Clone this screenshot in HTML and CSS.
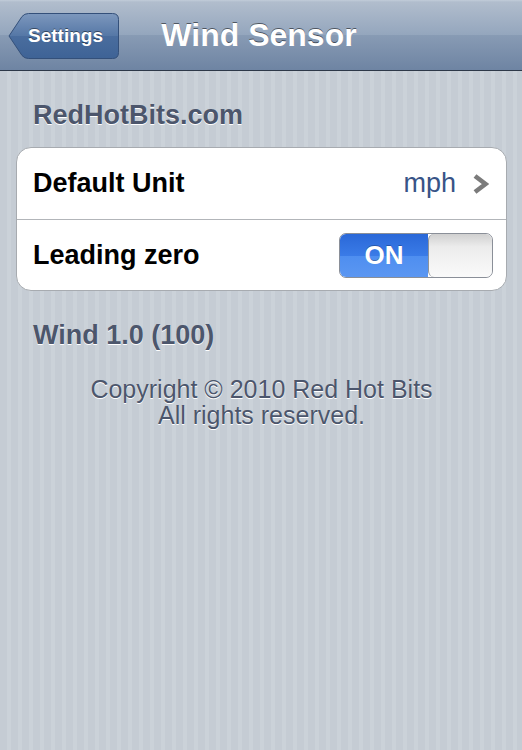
FILE: index.html
```html
<!DOCTYPE html>
<html lang="en">
<head>
  <meta charset="UTF-8" />
  <meta name="viewport" content="width=device-width, initial-scale=1.0" />
  <title>Wind Sensor</title>
  <link rel="stylesheet" href="styles.css">
</head>
<body>
  <nav class="navbar">
    <a href="#" class="back-btn">
      <svg class="back-shape" width="111" height="46" viewBox="0 0 111 46">
        <defs>
          <linearGradient id="backGrad" x1="0" y1="0" x2="0" y2="1">
            <stop offset="0" stop-color="#7d98bd" />
            <stop offset="0.5" stop-color="#5577a6" />
            <stop offset="0.5" stop-color="#4a6d9e" />
            <stop offset="1" stop-color="#3e6396" />
          </linearGradient>
        </defs>
        <path d="M1 23 L14 3.5 Q16.5 0.5 20.5 0.5 L104.5 0.5 Q110.5 0.5 110.5 6.5 L110.5 39.5 Q110.5 45.5 104.5 45.5 L20.5 45.5 Q16.5 45.5 14 42.5 Z" fill="url(#backGrad)" stroke="#34507a" stroke-width="1" />
      </svg>
      <span class="back-label">Settings</span>
    </a>
    <h1 class="title">Wind Sensor</h1>
  </nav>

  <main class="content">
    <h2 class="group-header">RedHotBits.com</h2>
    <div class="group">
      <div class="row">
        <span class="row-label">Default Unit</span>
        <span class="row-value">mph</span>
        <svg class="chevron" viewBox="0 0 18 20">
          <path d="M3 2 L13.5 10 L3 18" fill="none" stroke="#7b7b7b" stroke-width="4.6" />
        </svg>
      </div>
      <div class="row">
        <span class="row-label">Leading zero</span>
        <div class="switch">
          <span class="switch-on">ON</span>
          <span class="switch-knob"></span>
        </div>
      </div>
    </div>

    <h2 class="group-header version">Wind 1.0 (100)</h2>
    <p class="footer-note">Copyright © 2010 Red Hot Bits<br>All rights reserved.</p>
  </main>
</body>
</html>
```

FILE: styles.css
```css
* {
  box-sizing: border-box;
}
body {
  margin: 0;
  padding: 0;
  font-family: 'Liberation Sans', Arial, sans-serif;
  min-height: 750px;
  background: repeating-linear-gradient(90deg, #c5ccd4 0, #c5ccd4 7px, #cbd2d9 7px, #cbd2d9 11px);
}
.navbar {
  position: relative;
  display: flex;
  align-items: center;
  height: 71px;
  padding: 1px 0 0 8px;
  background: linear-gradient(#c2ccd9 0, #b1bdcd 2px, #94a6bd 50%, #889bb4 50%, #6e84a3 100%);
  border-bottom: 1px solid #2d3848;
}
.back-btn {
  position: relative;
  display: flex;
  align-items: center;
  width: 111px;
  height: 46px;
  text-decoration: none;
}
.back-shape {
  position: absolute;
  top: 0;
  left: 0;
}
.back-label {
  position: relative;
  padding-left: 20px;
  color: #fff;
  font-size: 19px;
  font-weight: bold;
  text-shadow: 0 -1px 0 rgba(0, 0, 0, 0.45);
}
.title {
  position: absolute;
  left: 0;
  right: 0;
  top: 0;
  bottom: 0;
  margin: 0;
  display: flex;
  align-items: center;
  justify-content: center;
  pointer-events: none;
  padding: 1px 4px 0 0;
  color: #fff;
  font-size: 32px;
  font-weight: bold;
  text-shadow: 0 -1px 0 rgba(0, 0, 0, 0.5);
}
.content {
  padding: 29px 15px 0 16px;
}
.group-header {
  margin: 0 0 16px 17px;
  color: #4c566c;
  font-size: 27px;
  font-weight: bold;
  line-height: 31px;
  text-shadow: 0 1px 0 #fff;
}
.group {
  background: #fff;
  border: 1px solid #a7abb0;
  border-radius: 15px;
  overflow: hidden;
}
.row {
  display: flex;
  align-items: center;
  height: 71px;
  padding: 0 13px 0 16px;
}
.row + .row {
  border-top: 1px solid #b2b5b9;
}
.row-label {
  flex: 1;
  color: #000;
  font-size: 27px;
  font-weight: bold;
}
.row-value {
  color: #385487;
  font-size: 27px;
  margin-right: 16px;
}
.chevron {
  display: block;
  flex-shrink: 0;
  width: 18px;
  height: 20px;
  margin-right: 3px;
}
.switch {
  display: flex;
  width: 154px;
  height: 45px;
  margin-top: 1px;
  border: 1px solid #8a8f98;
  border-radius: 7px;
  overflow: hidden;
}
.switch-on {
  display: flex;
  align-items: center;
  justify-content: center;
  width: 88px;
  color: #fff;
  font-size: 26px;
  font-weight: bold;
  background: linear-gradient(#2a68d8 0, #3a7be7 50%, #4e8ef0 50%, #5b97f2 100%);
  text-shadow: 0 -1px 0 rgba(0, 0, 0, 0.25);
}
.switch-knob {
  flex: 1;
  background: linear-gradient(#d0d0d0 0, #ececec 30%, #fafafa 100%);
  border-left: 1px solid #8f9399;
  border-radius: 6px;
}
.version {
  margin: 29px 0 0 17px;
}
.footer-note {
  margin: 25px 0 0;
  text-align: center;
  color: #4c566c;
  font-size: 25px;
  line-height: 26px;
  text-shadow: 0 1px 0 #fff;
}
```
